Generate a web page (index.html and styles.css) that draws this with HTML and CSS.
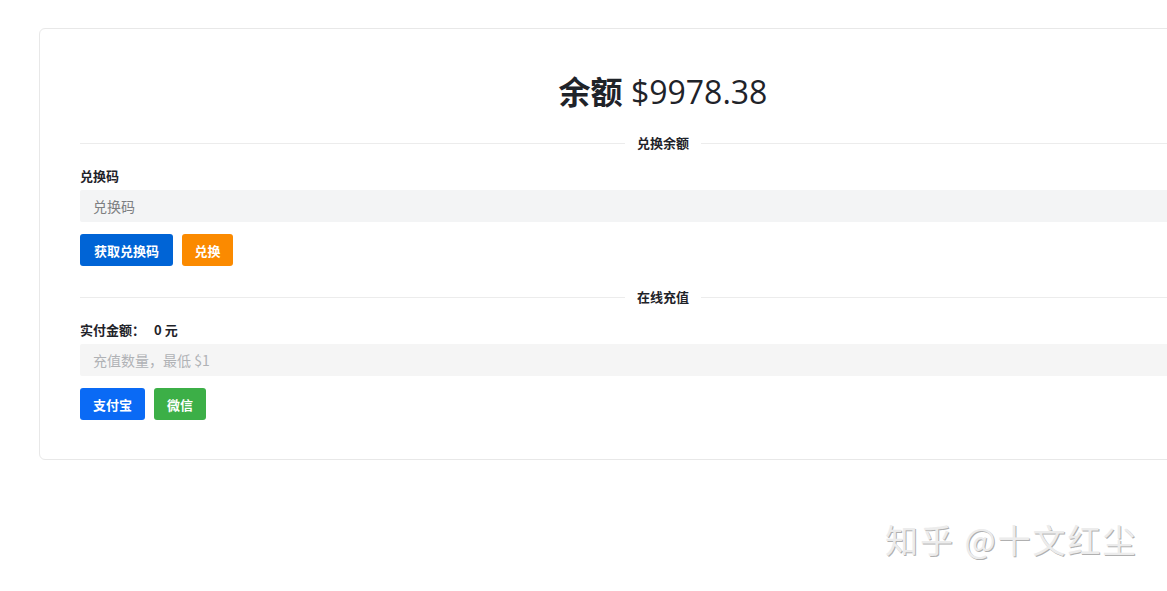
FILE: index.html
```html
<!DOCTYPE html>
<html lang="zh-CN">
<head>
<meta charset="utf-8">
<title>余额</title>
<link rel="stylesheet" href="styles.css">
</head>
<body>
<div class="page">
  <div class="card">
    <h1 class="balance"><span class="balance-label">余额</span> <span class="balance-value">$9978.38</span></h1>

    <div class="divider"><span>兑换余额</span></div>
    <div class="field">
      <label class="label">兑换码</label>
      <input class="input" type="text" placeholder="兑换码">
    </div>
    <div class="actions">
      <button class="btn btn-blue">获取兑换码</button>
      <button class="btn btn-orange">兑换</button>
    </div>

    <div class="divider"><span>在线充值</span></div>
    <div class="field">
      <label class="label">实付金额：<span class="amount">0 元</span></label>
      <input class="input input-light" type="text" placeholder="充值数量，最低 $1">
    </div>
    <div class="actions">
      <button class="btn btn-blue2">支付宝</button>
      <button class="btn btn-green">微信</button>
    </div>
  </div>
</div>
<div class="watermark">知乎 @十文红尘</div>
</body>
</html>
```
FILE: styles.css
```css
html, body {
  margin: 0;
  padding: 0;
  overflow: hidden;
  background: #ffffff;
}
body {
  font-family: "Noto Sans", "Noto Sans CJK SC", sans-serif;
  color: #1f2329;
  width: 1167px;
  height: 591px;
  position: relative;
}
.page {
  padding: 28px 0 0 39px;
}
.card {
  width: 1248px;
  box-sizing: border-box;
  border: 1px solid #e8e8e8;
  border-radius: 6px;
  padding: 41px 40px 39px;
  display: flex;
  flex-direction: column;
}
.balance {
  margin: 0;
  text-align: center;
  font-size: 32px;
  line-height: 40px;
  font-weight: 400;
  color: #1f2329;
}
.balance-label {
  font-weight: 700;
  font-family: "Noto Sans CJK SC", sans-serif;
}
.balance-value {
  font-family: "Open Sans", "Noto Sans", sans-serif;
  font-weight: 500;
}
.divider {
  display: flex;
  align-items: center;
  margin-top: 21px;
  font-family: "Noto Sans CJK SC", sans-serif;
  font-size: 13px;
  line-height: 20px;
  font-weight: 700;
  color: #1f2329;
}
.divider::before,
.divider::after {
  content: "";
  flex: 1;
  border-top: 1px solid #ececec;
}
.divider span {
  padding: 0 12px;
}
.field {
  display: flex;
  flex-direction: column;
  margin-top: 13px;
}
.label {
  font-family: "Noto Sans CJK SC", sans-serif;
  font-size: 13px;
  line-height: 20px;
  font-weight: 700;
  color: #1f2329;
}
.amount {
  margin-left: 9px;
}
.input {
  margin-top: 4px;
  height: 32px;
  box-sizing: border-box;
  border: none;
  outline: none;
  border-radius: 2px;
  background: #f3f4f5;
  padding: 0 13px;
  font-family: "Noto Sans CJK SC", sans-serif;
  font-size: 14px;
  color: #333;
}
.input::placeholder {
  color: #7d7f82;
}
.input-light {
  background: #f5f5f5;
}
.input-light::placeholder {
  color: #b0b2b5;
}
.actions {
  display: flex;
  gap: 9px;
  margin-top: 12px;
}
.btn {
  height: 32px;
  border: none;
  border-radius: 3px;
  padding: 0 13px;
  color: #ffffff;
  font-family: "Noto Sans CJK SC", sans-serif;
  font-size: 13px;
  font-weight: 700;
  cursor: pointer;
}
.btn-blue { background: #0064d6; padding: 0 14px; }
.btn-orange { background: #fb8a00; padding: 0 12.5px; }
.btn-blue2 { background: #0a6af5; }
.btn-green { background: #3caf47; }
.watermark {
  position: absolute;
  left: 885px;
  top: 516px;
  font-family: "Noto Sans CJK SC", sans-serif;
  font-size: 33px;
  line-height: 46px;
  letter-spacing: 2px;
  color: #ececec;
  text-shadow: 1px 1px 0 #b0b0b0;
  white-space: nowrap;
}
```
